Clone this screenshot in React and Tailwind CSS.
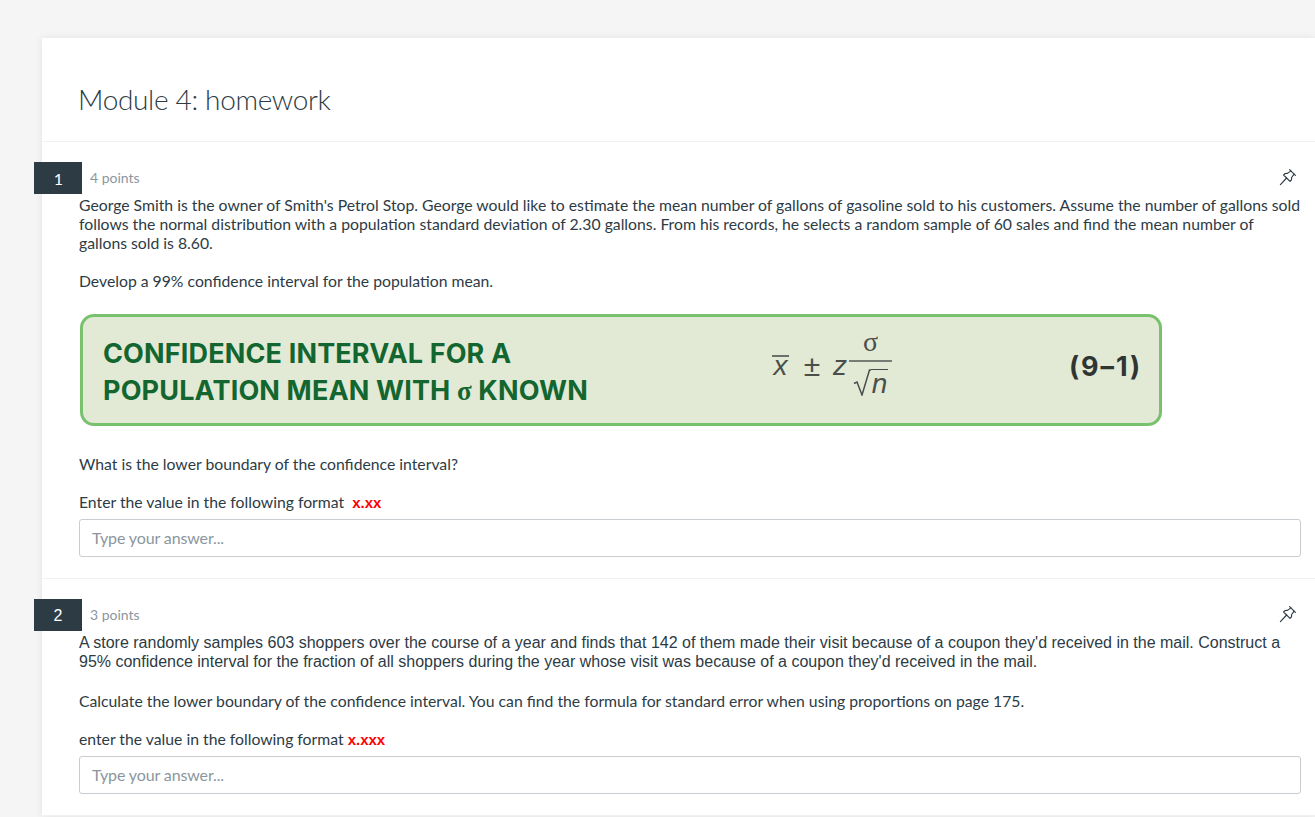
import React from "react";

function PinIcon() {
  return (
    <svg width="18" height="18" viewBox="0 0 18 18" fill="none" stroke="#2d3b45" strokeWidth="1.15" strokeLinejoin="round" strokeLinecap="round" className="block">
      <path d="M10.6 1.6 16.4 7.4" />
      <path d="M11.9 2.9 8.5 5.4 6.2 5.5 4.6 7 11 13.4 12.5 11.8 12.6 9.5 15.1 6.1" />
      <path d="M7.6 10 1.4 16.6" />
    </svg>
  );
}

function Badge({ n, points, numberClass }) {
  return (
    <div className="flex items-center h-8 -ml-2">
      <div className={numberClass}>{n}</div>
      <span className="ml-2 mb-[2px] text-[14px] text-[#8b969e] font-['Lato',sans-serif]">{points}</span>
      <span className="ml-auto mr-[4px] mb-[2px]"><PinIcon /></span>
    </div>
  );
}

function Answer() {
  return (
    <input
      placeholder="Type your answer..."
      className="block w-full h-[38px] mt-[7px] px-3 pb-[2px] rounded-[3px] border border-[#c7cdd1] bg-white text-[16px] tracking-[-0.12px] font-['Lato',sans-serif] placeholder:text-[#8b969e] outline-none"
    />
  );
}

function FormulaImage() {
  return (
    <div className="mt-[24px] ml-[1px] w-[1082px] h-[112px] rounded-[14px] border-[3px] border-[#78c26e] bg-[#e2ead6] flex items-center pl-[20px] pr-[17px]">
      <div className="w-[669px] shrink-0 pt-[5px] text-[#13662f] font-['Inter',sans-serif] font-bold text-[27px] leading-[37px] tracking-[0.15px]">
        <div>CONFIDENCE INTERVAL FOR A</div>
        <div>POPULATION MEAN WITH <span className="font-['Liberation_Serif',serif]">σ</span> KNOWN</div>
      </div>
      <div className="flex items-center mb-[8px] text-[#4a4f4c] font-['Liberation_Sans',sans-serif] text-[28px] leading-[28px]">
        <span className="relative w-[17px] text-center italic">
          x
          <span className="absolute left-0 top-[3px] w-[17px] h-[2px] bg-[#6a6f6a]"></span>
        </span>
        <span className="w-[18px] ml-[14px] text-center text-[30px]">±</span>
        <span className="w-[14px] ml-[12px] text-center italic">z</span>
        <div className="flex flex-col items-center ml-[2px] w-[43px]">
          <span className="h-[24px] font-['Liberation_Serif',serif] text-[28px] leading-[11px]">σ</span>
          <span className="w-full h-[2px] bg-[#777c75]"></span>
          <div className="flex items-start mt-[7px] h-[27px]">
            <svg width="18" height="27" viewBox="0 0 18 27" fill="none" stroke="#4a4f4c" strokeWidth="1.5" className="block">
              <path d="M1 14.5 4 13 9 26 16.5 1 18 1" />
            </svg>
            <span className="w-[17px] h-[27px] border-t-[1.5px] border-[#4a4f4c] text-center italic leading-[28px]">n</span>
          </div>
        </div>
      </div>
      <div className="ml-auto mb-[8px] text-[#2f3532] font-['Inter',sans-serif] font-bold text-[27px] tracking-[1.9px]">(9–1)</div>
    </div>
  );
}

export default function App() {
  return (
    <div className="h-[817px] overflow-hidden bg-[#f5f5f5] pt-[38px] pl-[42px] font-['Lato',sans-serif] text-[#2d3b45] text-[15.76px] leading-[19px]">
      <div className="bg-white shadow-[0_0_8px_rgba(0,0,0,0.08)]">
        <div className="h-[104px] border-b border-[#f2f2f2] pl-[36px] pt-[42px]">
          <h1 className="text-[28px] leading-[38px] font-light tracking-[-0.33px] text-[#2d3b45]">Module 4: homework</h1>
        </div>

        <section className="pt-[20px] pr-[14px] pb-[21px] border-b border-[#f2f2f2]">
          <Badge n="1" points="4 points" numberClass="w-12 h-8 pl-[1px] bg-[#2d3b45] text-white flex items-center justify-center text-[16px] font-['Lato',sans-serif]" />
          <div className="pl-[37px] mt-[1px]">
            <p>George Smith is the owner of Smith's Petrol Stop. George would like to estimate the mean number of gallons of gasoline sold to his customers. Assume the number of gallons sold follows the normal distribution with a population standard deviation of 2.30 gallons. From his records, he selects a random sample of 60 sales and find the mean number of gallons sold is 8.60.</p>
            <p className="mt-[19px]">Develop a 99% confidence interval for the population mean.</p>
            <FormulaImage />
            <p className="mt-[28px]">What is the lower boundary of the confidence interval?</p>
            <p className="mt-[19px]">Enter the value in the following format&nbsp; <span className="text-[#ff0000] font-['Liberation_Sans',sans-serif] font-bold text-[15px]">x.xx</span></p>
            <Answer />
          </div>
        </section>

        <section className="pt-[20px] pr-[14px] pb-[21px] border-b border-[#f2f2f2]">
          <Badge n="2" points="3 points" numberClass="w-12 h-8 bg-[#2d3b45] text-white flex items-center justify-center text-[16px] font-['Liberation_Sans',sans-serif]" />
          <div className="pl-[37px] mt-[2px]">
            <p className="font-['Liberation_Sans',sans-serif] text-[16px]">A store randomly samples 603 shoppers over the course of a year and finds that 142 of them made their visit because of a coupon they'd received in the mail. Construct a 95% confidence interval for the fraction of all shoppers during the year whose visit was because of a coupon they'd received in the mail.</p>
            <p className="mt-[20px]">Calculate the lower boundary of the confidence interval. You can find the formula for standard error when using proportions on page 175.</p>
            <p className="mt-[19px]">enter the value in the following format <span className="text-[#ff0000] font-['Liberation_Sans',sans-serif] font-bold text-[15px]">x.xxx</span></p>
            <Answer />
          </div>
        </section>
      </div>
    </div>
  );
}
